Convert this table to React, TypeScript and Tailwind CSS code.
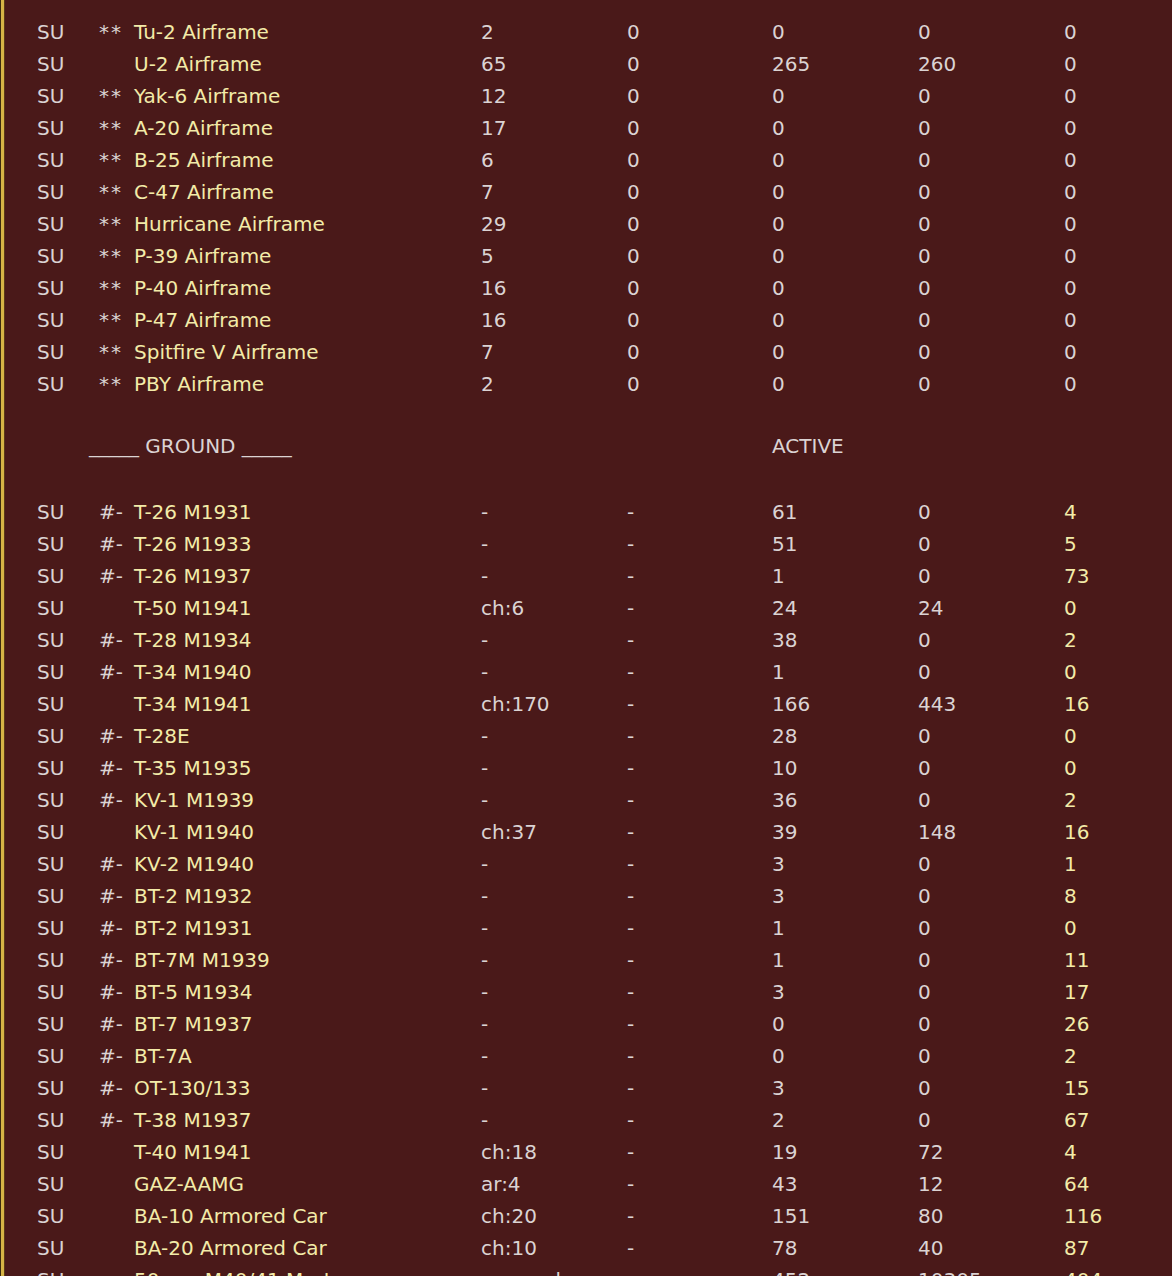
type Row = [string, string, string, string, string, string, string];

const airRows: Row[] = [
  ["**", "Tu-2 Airframe", "2", "0", "0", "0", "0"],
  ["", "U-2 Airframe", "65", "0", "265", "260", "0"],
  ["**", "Yak-6 Airframe", "12", "0", "0", "0", "0"],
  ["**", "A-20 Airframe", "17", "0", "0", "0", "0"],
  ["**", "B-25 Airframe", "6", "0", "0", "0", "0"],
  ["**", "C-47 Airframe", "7", "0", "0", "0", "0"],
  ["**", "Hurricane Airframe", "29", "0", "0", "0", "0"],
  ["**", "P-39 Airframe", "5", "0", "0", "0", "0"],
  ["**", "P-40 Airframe", "16", "0", "0", "0", "0"],
  ["**", "P-47 Airframe", "16", "0", "0", "0", "0"],
  ["**", "Spitfire V Airframe", "7", "0", "0", "0", "0"],
  ["**", "PBY Airframe", "2", "0", "0", "0", "0"],
];

const groundRows: Row[] = [
  ["#-", "T-26 M1931", "-", "-", "61", "0", "4"],
  ["#-", "T-26 M1933", "-", "-", "51", "0", "5"],
  ["#-", "T-26 M1937", "-", "-", "1", "0", "73"],
  ["", "T-50 M1941", "ch:6", "-", "24", "24", "0"],
  ["#-", "T-28 M1934", "-", "-", "38", "0", "2"],
  ["#-", "T-34 M1940", "-", "-", "1", "0", "0"],
  ["", "T-34 M1941", "ch:170", "-", "166", "443", "16"],
  ["#-", "T-28E", "-", "-", "28", "0", "0"],
  ["#-", "T-35 M1935", "-", "-", "10", "0", "0"],
  ["#-", "KV-1 M1939", "-", "-", "36", "0", "2"],
  ["", "KV-1 M1940", "ch:37", "-", "39", "148", "16"],
  ["#-", "KV-2 M1940", "-", "-", "3", "0", "1"],
  ["#-", "BT-2 M1932", "-", "-", "3", "0", "8"],
  ["#-", "BT-2 M1931", "-", "-", "1", "0", "0"],
  ["#-", "BT-7M M1939", "-", "-", "1", "0", "11"],
  ["#-", "BT-5 M1934", "-", "-", "3", "0", "17"],
  ["#-", "BT-7 M1937", "-", "-", "0", "0", "26"],
  ["#-", "BT-7A", "-", "-", "0", "0", "2"],
  ["#-", "OT-130/133", "-", "-", "3", "0", "15"],
  ["#-", "T-38 M1937", "-", "-", "2", "0", "67"],
  ["", "T-40 M1941", "ch:18", "-", "19", "72", "4"],
  ["", "GAZ-AAMG", "ar:4", "-", "43", "12", "64"],
  ["", "BA-10 Armored Car", "ch:20", "-", "151", "80", "116"],
  ["", "BA-20 Armored Car", "ch:10", "-", "78", "40", "87"],
  ["", "50mm M40/41 Mortar", "sq:need", "-", "452", "10305", "404"],
];

const grid =
  "grid h-8 grid-cols-[62px_35px_347px_146px_145px_146px_146px_1fr] items-center whitespace-nowrap";

function UnitRow({ row, yellowLast }: { row: Row; yellowLast?: boolean }) {
  const [prefix, name, c3, c4, c5, c6, c7] = row;
  return (
    <div className={grid}>
      <span>SU</span>
      <span className={prefix === "**" ? "tracking-[2px]" : ""}>{prefix}</span>
      <span className="text-[#f3eba8]">{name}</span>
      <span>{c3}</span>
      <span>{c4}</span>
      <span>{c5}</span>
      <span>{c6}</span>
      <span className={yellowLast ? "text-[#f3eba8]" : ""}>{c7}</span>
    </div>
  );
}

export default function App() {
  return (
    <div className="flex h-[1276px] w-[1172px] overflow-hidden bg-[#4a1919]">
      {/* window edge */}
      <div className="w-px bg-[#3a2a10]" />
      <div className="w-[3px] bg-[#d6b446]" />
      <div className="w-px bg-[#5a3a18]" />

      <div
        className="flex-1 pt-4 pl-[32px] text-[20px] text-[#dbd3d3]"
        style={{ fontFamily: '"DejaVu Sans", Verdana, sans-serif' }}
      >
        {airRows.map((r) => (
          <UnitRow key={r[1]} row={r} />
        ))}

        <div className="h-8" />
        <div className={grid}>
          <span className="col-span-3 -mt-1 pl-[52px]">_____ GROUND _____</span>
          <span />
          <span />
          <span className="-mt-1">ACTIVE</span>
        </div>
        <div className="h-8" />

        {groundRows.map((r) => (
          <UnitRow key={r[1]} row={r} yellowLast />
        ))}
      </div>
    </div>
  );
}
